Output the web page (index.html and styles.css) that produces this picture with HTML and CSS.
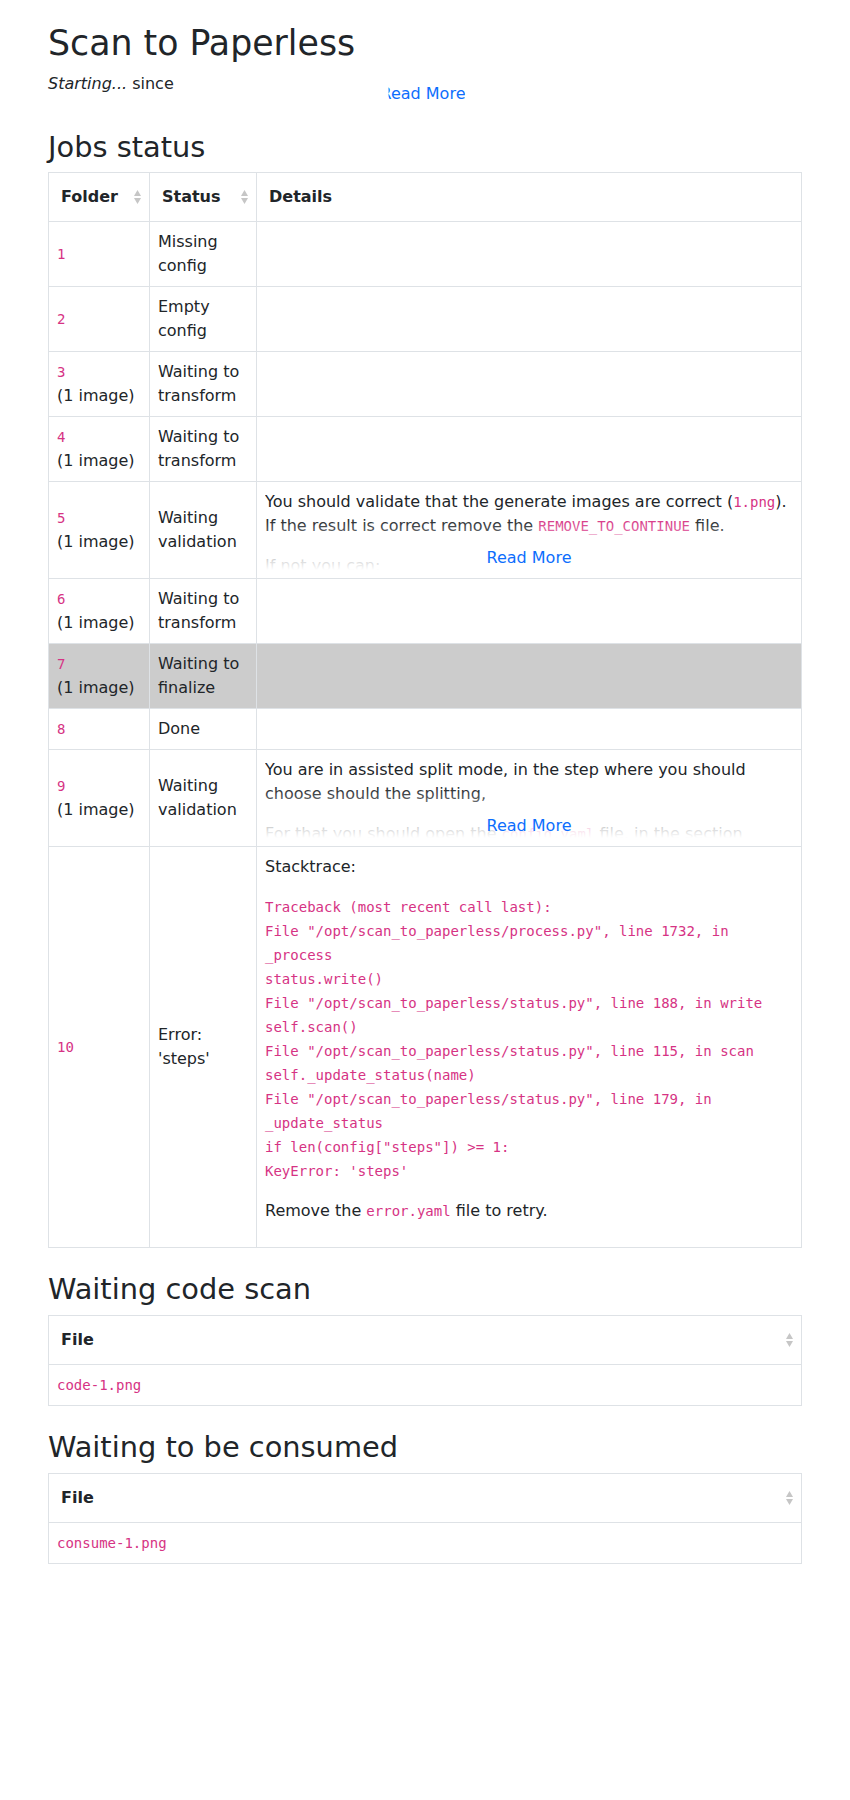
FILE: index.html
```html
<!DOCTYPE html>
<html lang="en">
<head>
<meta charset="utf-8">
<title>Scan to Paperless</title>
<link rel="stylesheet" href="styles.css">
</head>
<body>
<main class="page">
  <h1 class="title">Scan to Paperless</h1>
  <div class="intro">
    <p class="intro-text"><em>Starting...</em> since</p>
    <a class="intro-more" href="#">Read More</a>
  </div>

  <h2 class="section-title">Jobs status</h2>
  <table class="grid">
    <colgroup><col class="c-folder"><col class="c-status"><col></colgroup>
    <thead>
      <tr>
        <th class="sortable">Folder<svg class="sort" viewBox="0 0 7 14" width="7" height="14"><polygon points="0,6 3.5,0 7,6"/><polygon points="0,8 3.5,14 7,8"/></svg></th>
        <th class="sortable">Status<svg class="sort" viewBox="0 0 7 14" width="7" height="14"><polygon points="0,6 3.5,0 7,6"/><polygon points="0,8 3.5,14 7,8"/></svg></th>
        <th>Details</th>
      </tr>
    </thead>
    <tbody>
      <tr><td><code class="code">1</code></td><td>Missing config</td><td></td></tr>
      <tr><td><code class="code">2</code></td><td>Empty config</td><td></td></tr>
      <tr><td><code class="code">3</code><br>(1 image)</td><td>Waiting to transform</td><td></td></tr>
      <tr><td><code class="code">4</code><br>(1 image)</td><td>Waiting to transform</td><td></td></tr>
      <tr>
        <td><code class="code">5</code><br>(1 image)</td>
        <td>Waiting validation</td>
        <td>
          <div class="readmore">
            <p class="para">You should validate that the generate images are correct (<code class="code">1.png</code>).<br>If the result is correct remove the <code class="code">REMOVE_TO_CONTINUE</code> file.</p>
            <p class="para">If not you can:</p>
            <a class="more-link" href="#">Read More</a>
          </div>
        </td>
      </tr>
      <tr><td><code class="code">6</code><br>(1 image)</td><td>Waiting to transform</td><td></td></tr>
      <tr class="row-active"><td><code class="code">7</code><br>(1 image)</td><td>Waiting to finalize</td><td></td></tr>
      <tr><td><code class="code">8</code></td><td>Done</td><td></td></tr>
      <tr>
        <td><code class="code">9</code><br>(1 image)</td>
        <td>Waiting validation</td>
        <td>
          <div class="readmore">
            <p class="para">You are in assisted split mode, in the step where you should<br>choose should the splitting,</p>
            <p class="para">For that you should open the <code class="code">config.yaml</code> file, in the section</p>
            <a class="more-link" href="#">Read More</a>
          </div>
        </td>
      </tr>
      <tr>
        <td><code class="code">10</code></td>
        <td>Error: 'steps'</td>
        <td>
          <p class="para">Stacktrace:</p>
          <p class="para"><code class="code">Traceback (most recent call last):<br>File "/opt/scan_to_paperless/process.py", line 1732, in _process<br>status.write()<br>File "/opt/scan_to_paperless/status.py", line 188, in write<br>self.scan()<br>File "/opt/scan_to_paperless/status.py", line 115, in scan<br>self._update_status(name)<br>File "/opt/scan_to_paperless/status.py", line 179, in _update_status<br>if len(config["steps"]) &gt;= 1:<br>KeyError: 'steps'</code></p>
          <p class="para">Remove the <code class="code">error.yaml</code> file to retry.</p>
        </td>
      </tr>
    </tbody>
  </table>

  <h2 class="section-title">Waiting code scan</h2>
  <table class="grid">
    <thead>
      <tr><th class="sortable">File<svg class="sort" viewBox="0 0 7 14" width="7" height="14"><polygon points="0,6 3.5,0 7,6"/><polygon points="0,8 3.5,14 7,8"/></svg></th></tr>
    </thead>
    <tbody>
      <tr><td><code class="code">code-1.png</code></td></tr>
    </tbody>
  </table>

  <h2 class="section-title">Waiting to be consumed</h2>
  <table class="grid">
    <thead>
      <tr><th class="sortable">File<svg class="sort" viewBox="0 0 7 14" width="7" height="14"><polygon points="0,6 3.5,0 7,6"/><polygon points="0,8 3.5,14 7,8"/></svg></th></tr>
    </thead>
    <tbody>
      <tr><td><code class="code">consume-1.png</code></td></tr>
    </tbody>
  </table>
</main>
</body>
</html>
```

FILE: styles.css
```css
* {
  box-sizing: border-box;
}

html,
body {
  margin: 0;
  padding: 0;
  background: #fff;
}

body {
  font-family: "DejaVu Sans", sans-serif;
  font-size: 16px;
  line-height: 1.5;
  color: #212529;
}

a {
  color: #0d6efd;
  text-decoration: none;
}

.page {
  padding: 23px 48px 40px;
}

.title {
  font-size: 34.75px;
  font-weight: 500;
  line-height: 1.2;
  margin: 0 0 7px;
}

.intro {
  position: relative;
  height: 58px;
}

.intro-text {
  margin: 0;
}

.intro-more {
  position: absolute;
  top: 10px;
  left: calc(50% - 2px);
  transform: translateX(-50%);
  clip-path: inset(0 0 0 8px);
}

.section-title {
  font-size: 28.85px;
  font-weight: 500;
  line-height: 1.2;
  margin: 0 0 8px;
}

.grid {
  width: 100%;
  border-collapse: collapse;
  table-layout: fixed;
  margin-bottom: 24px;
  border: 1px solid #dee2e6;
}

.c-folder {
  width: 101px;
}

.c-status {
  width: 107px;
}

.grid th,
.grid td {
  border: 1px solid #dee2e6;
  vertical-align: middle;
  text-align: left;
}

.grid th {
  padding: 12px 26px 12px 12px;
  font-weight: 700;
  position: relative;
}

.grid td {
  padding: 8px;
}

.sort {
  position: absolute;
  right: 8px;
  top: 50%;
  transform: translateY(-50%);
  fill: #c6c6c6;
}

.row-active td {
  background: #ccc;
}

.code {
  font-family: "DejaVu Sans Mono", monospace;
  font-size: 14px;
  color: #d63384;
  word-wrap: break-word;
}

.para {
  margin: 0 0 16px;
}

.readmore {
  position: relative;
  max-height: 80px;
  overflow: hidden;
}

.readmore::after {
  content: "";
  position: absolute;
  inset: 0;
  background: linear-gradient(to bottom, rgba(255, 255, 255, 0) 35%, #fff 100%);
  pointer-events: none;
}

.more-link {
  position: absolute;
  bottom: 0;
  left: 50%;
  transform: translateX(-50%);
  z-index: 1;
  line-height: 24px;
  white-space: nowrap;
}
```
